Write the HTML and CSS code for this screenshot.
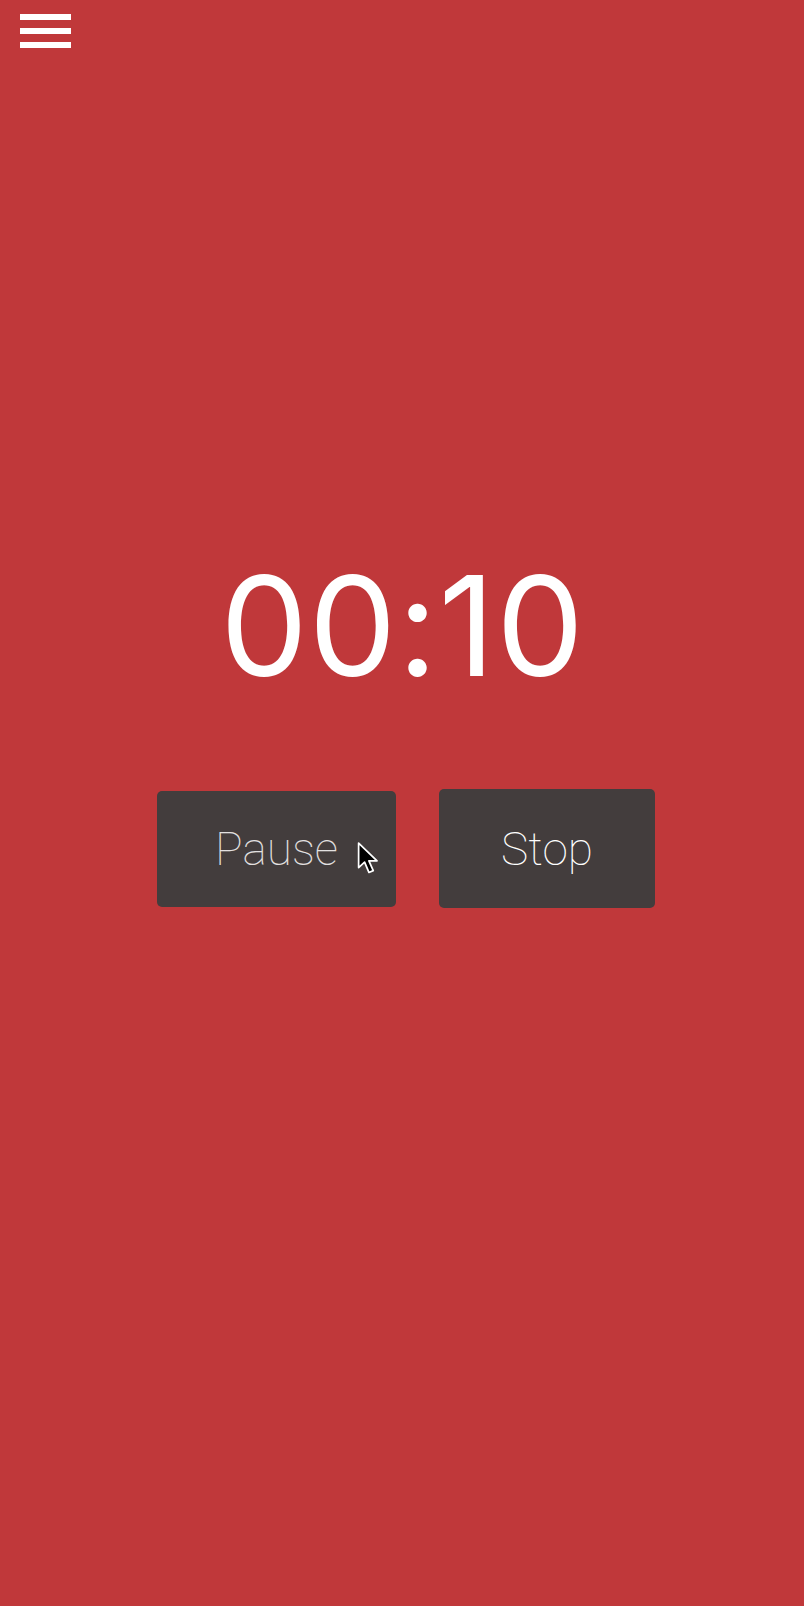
FILE: index.html
```html
<!DOCTYPE html>
<html lang="en">
<head>
<meta charset="utf-8">
<title>Timer</title>
<link rel="stylesheet" href="styles.css">
</head>
<body>
<div class="app">
  <header class="topbar">
    <button class="menu" aria-label="Menu">
      <span class="bar"></span><span class="bar"></span><span class="bar"></span>
    </button>
  </header>
  <main class="main">
    <div class="timer">00:10</div>
    <div class="controls">
      <button class="btn btn-pause">Pause
        <svg class="cursor" width="26" height="38" viewBox="0 0 24 34" aria-hidden="true">
          <path d="M1.5 1.5 L1.5 24 L7 19 L11 28.5 L15 26.8 L11 17.8 L18.5 17.8 Z" fill="#000" stroke="#fff" stroke-width="1.6" stroke-linejoin="round"/>
        </svg>
      </button>
      <button class="btn btn-stop">Stop</button>
    </div>
  </main>
</div>
</body>
</html>
```

FILE: styles.css
```css
html, body {
  margin: 0;
  padding: 0;
  height: 100%;
}
body {
  background: #c0383a;
  font-family: "Liberation Sans", Arial, sans-serif;
  color: #fff;
}
.app {
  min-height: 1606px;
  display: flex;
  flex-direction: column;
}
.topbar {
  padding: 14px 0 0 20px;
  height: 48px;
  box-sizing: border-box;
}
.menu {
  background: none;
  border: 0;
  padding: 0;
  display: flex;
  flex-direction: column;
  gap: 8.5px;
  cursor: pointer;
}
.bar {
  display: block;
  width: 51px;
  height: 5.5px;
  background: #fff;
}
.main {
  display: flex;
  flex-direction: column;
  align-items: center;
}
.timer {
  margin-top: 508px;
  padding-left: 1px;
  font-family: "Inter", "Liberation Sans", sans-serif;
  font-size: 139px;
  line-height: 1;
  font-weight: 400;
  letter-spacing: 1px;
  color: #fff;
}
.controls {
  margin-top: 94px;
  display: flex;
  align-items: center;
  gap: 43px;
  padding-left: 8px;
}
.btn {
  position: relative;
  background: #433d3d;
  border: 0;
  border-radius: 5px;
  color: #fff;
  font-family: "Roboto", "Liberation Sans", sans-serif;
  font-weight: 100;
  font-size: 46px;
  padding: 0;
  display: flex;
  align-items: center;
  justify-content: center;
}
.btn-pause {
  width: 239px;
  height: 116px;
  color: #e2e0e0;
}
.btn-stop {
  width: 216px;
  height: 119px;
}
.cursor {
  position: absolute;
  left: 200px;
  top: 50px;
}
```
